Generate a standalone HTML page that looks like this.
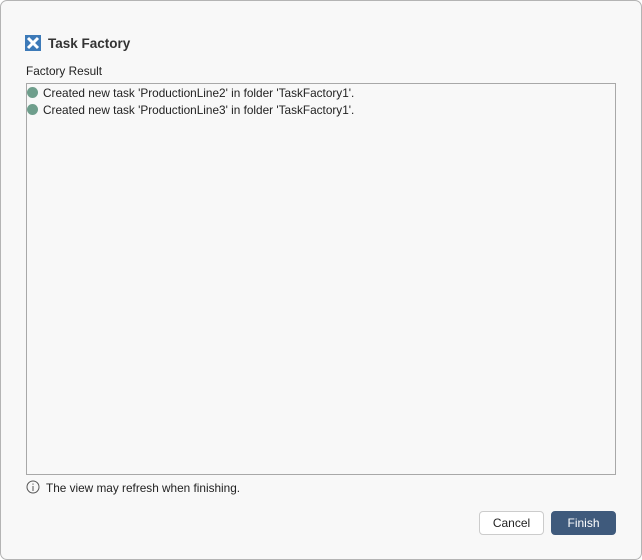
<!DOCTYPE html>
<html><head><style>
body{margin:0;width:642px;height:560px;background:#fff;font-family:"Liberation Sans",sans-serif;overflow:hidden}
.win{position:absolute;left:0;top:0;width:640px;height:558px;border:1px solid #b4b4b4;border-radius:7px;background:#f8f8f8}
.t{position:absolute;font-size:11.8px;color:#222}
.box{position:absolute;left:25px;top:82px;width:588px;height:390px;border:1px solid #a8a8a8;background:#f8f8f8}
.dot{display:inline-block;width:11px;height:11px;border-radius:50%;background:#6e9e8c;vertical-align:-1px;margin-right:5px}
.btn{position:absolute;top:510px;height:22px;width:63px;border-radius:4px;font-size:12px;text-align:center;line-height:22px}
</style></head><body>
<div class="win">
<svg style="position:absolute;left:24px;top:34px" width="16" height="16"><rect width="16" height="16" fill="#3d7ab8"/><path d="M3 3L13 13M13 3L3 13" stroke="#fff" stroke-width="3"/></svg>
<div class="t" style="left:47px;top:35px;font-size:13.5px;font-weight:bold;color:#333">Task Factory</div>
<div class="t" style="left:25px;top:63px">Factory Result</div>
<div class="box">
<div class="t" style="left:0;top:2px;white-space:nowrap"><span class="dot"></span>Created new task 'ProductionLine2' in folder 'TaskFactory1'.</div>
<div class="t" style="left:0;top:19px;white-space:nowrap"><span class="dot"></span>Created new task 'ProductionLine3' in folder 'TaskFactory1'.</div>
</div>
<svg style="position:absolute;left:25px;top:479px" width="14" height="14"><circle cx="7" cy="7" r="6" fill="none" stroke="#555"/><path d="M7 6v5M7 3.5v1.2" stroke="#555"/></svg>
<div class="t" style="left:45px;top:480px">The view may refresh when finishing.</div>
<div class="btn" style="left:478px;background:#fff;border:1px solid #ccc;color:#222">Cancel</div>
<div class="btn" style="left:550px;background:#3f5a7c;border:1px solid #3f5a7c;color:#fff">Finish</div>
</div>
</body></html>
